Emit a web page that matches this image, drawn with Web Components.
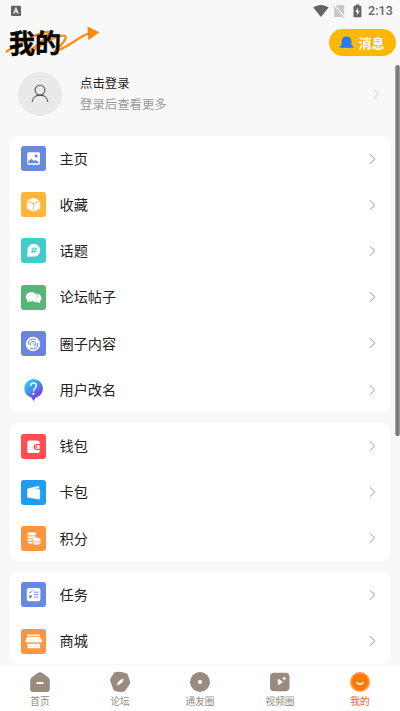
<!DOCTYPE html>
<html lang="zh-CN">
<head>
<meta charset="utf-8">
<title>我的</title>
<style>
html,body{margin:0;height:100%;overflow:hidden}
body{font-family:"Noto Sans CJK SC",sans-serif;background:#f8f8f8;color:#222}
</style>
</head>
<body>
<profile-app></profile-app>
<script>
const ICONS = {
  home: `<rect width="25" height="25" rx="3" fill="#668bdd"/><rect x="6.3" y="6.2" width="12.6" height="12.6" rx="1.2" fill="#fff"/><path d="M7.2 17.3V15.5l3.2-2.8 2.4 2.3 1.7-1 3 1.8v1.5z" fill="#668bdd"/><circle cx="15.1" cy="9.9" r="1.5" fill="#668bdd"/>`,
  box: `<rect width="25" height="25" rx="3" fill="#ffb43c"/><path d="M12.5 5.7 18 8.4 12.5 11.2 7 8.4zM6.2 9.6l5.8 2.9v7.1l-5.8-3zM18.8 9.6 13 12.5v7.1l5.8-3z" fill="#fff" stroke="#fff" stroke-width=".4" stroke-linejoin="round"/>`,
  topic: `<rect width="25" height="25" rx="3" fill="#40ccc8"/><path d="M6.4 18.7V12.2a6.4 6.4 0 1 1 6.4 6.4z" fill="#fff"/><path d="M12.5 9.3l-1.4 5.8M15.1 9.3l-1.4 5.8M10.5 11h5.3M10 13.4h5.3" stroke="#40ccc8" stroke-width="1"/>`,
  forum: `<rect width="25" height="25" rx="3" fill="#55b777"/><path d="M15.8 8.6c2.8.2 4.6 2.1 4.6 4.4 0 1.4-.6 2.5-1.6 3.3l.6 2-2.4-1.1c-1.6.3-3.3 0-4.5-.8 3.3-.9 5.2-4.3 3.3-7.8z" fill="#fff"/><path d="M10.4 7.2c3.4 0 5.8 2 5.8 4.6s-2.4 4.7-5.8 4.7c-.7 0-1.4-.1-2-.3l-2.3 1.3.5-2.3c-1.2-.9-1.8-2-1.8-3.4 0-2.6 2.4-4.6 5.6-4.6z" fill="#fff"/>`,
  circle: `<rect width="25" height="25" rx="3" fill="#6b84e2"/><circle cx="12" cy="13" r="7.2" fill="#fff"/><g fill="none" stroke="#6b84e2" stroke-width="1" stroke-linecap="round"><path d="M7.2 13.4a5 5 0 0 1 7.4-4.9M17 12.4a5 5 0 0 1-7.4 5"/><path d="M9.4 14a2.8 2.8 0 1 1 4.3 1.5"/><path d="M12 12.8l1.2.7"/></g>`,
  rename: `<defs><linearGradient id="g" x1="0" y1="0" x2=".75" y2="1"><stop offset=".1" stop-color="#25d3f5"/><stop offset=".5" stop-color="#478df0"/><stop offset="1" stop-color="#8a1fd2"/></linearGradient></defs><path d="M12.5 2a9.4 9.4 0 0 1 9.4 9.4c0 4.4-3 8-7.1 9.1L12.5 24l-2.2-3.5A9.4 9.4 0 0 1 12.5 2z" fill="url(#g)"/><path d="M9.8 8.6C10 6.8 11.1 6 12.6 6c1.7 0 2.8 1 2.8 2.6 0 2.2-2.6 2.5-2.8 5.2" fill="none" stroke="#e5ffff" stroke-width="1.5" stroke-linecap="round"/><circle cx="12.4" cy="16.8" r="1.1" fill="#e5ffff"/>`,
  wallet: `<rect width="25" height="25" rx="3" fill="#fe4f50"/><path d="M8.5 6.4h8a2.2 2.2 0 0 1 2.2 2.2v1.5h-3.2a2.9 2.9 0 0 0 0 5.8h3.2v1a2.2 2.2 0 0 1-2.2 2.2h-8a2.2 2.2 0 0 1-2.2-2.2V8.6a2.2 2.2 0 0 1 2.2-2.2z" fill="#fff"/><path d="M15.6 11.2h3.1v3.5h-3.1a1.75 1.75 0 0 1 0-3.5z" fill="#fff"/><circle cx="15.3" cy="12.9" r="1" fill="#fe4f50"/>`,
  card: `<rect width="25" height="25" rx="3" fill="#209df0"/><path d="M6.6 8.9 17.6 6.2l.4 2-7.4 1.1 8 .2.1 9.6-12.1-1.8z" fill="#fff" stroke="#fff" stroke-width=".7" stroke-linejoin="round"/><path d="M13 9.1l5.8-.7v.7z" fill="#209df0"/>`,
  coins: `<rect width="25" height="25" rx="3" fill="#ff9541"/><ellipse cx="10.8" cy="7.8" rx="4.2" ry="1.8" fill="#fff"/><path d="M6.6 8.9c1.4 1.8 6.9 1.8 8.4 0v2c-1.4.4-2.8.9-3.7 1.7-2 .2-4.1-.2-4.7-1.1zM6.6 12.2c1.1.8 2.6 1.1 4.2 1v2c-1.6.2-3.7-.2-4.2-1.1zM6.6 15c1.1.8 2.6 1.1 4.2 1v1.7c-2.3.1-4.2-.5-4.2-1.4z" fill="#fff" opacity=".88"/><ellipse cx="15.5" cy="13.4" rx="4" ry="2" fill="#fff"/><path d="M11.5 14.8c1.5 1.7 6.5 1.7 8 0v2.6c-1.2 1.7-6.8 1.7-8 0z" fill="#fff" opacity=".75"/>`,
  task: `<rect width="25" height="25" rx="3" fill="#668bdd"/><rect x="5.8" y="6" width="13.6" height="13.2" rx="2.2" fill="#fff"/><path d="m8 9.7 1.2 1.2 2.3-2.5M13 10.2h4.6M13 12.5h4.6M13 15h4.6" fill="none" stroke="#668bdd" stroke-width=".9"/><circle cx="9.4" cy="14.5" r="1.5" fill="#668bdd"/>`,
  shop: `<rect width="25" height="25" rx="3" fill="#ff9541"/><path d="M6 5.5h13v1.3H6zM6.1 7.8h12.8l2.3 4c0 2.1-2.8 2.5-3.6.8-1 1.7-3.1 1.7-4.2 0-1 1.7-2.6 1.7-3.8 0-1.2 1.7-5.4 1.3-5.2-.8zM6.5 14.9c1.1.2 2.2-.1 3.1-.6 1.1.9 2.6.8 3.7 0 1.2.8 2.7.9 4 0 .6.4 1.1.6 1.6.6v4.3H6.5z" fill="#fff"/>`
};
const chevron = `<svg part="arrow" width="7" height="12" viewBox="0 0 7 12"><path d="M1 1.4 5.7 6 1 10.6" fill="none" stroke="currentColor" stroke-width="1"/></svg>`;
function element(name, render) {
  customElements.define(name, class extends HTMLElement {
    connectedCallback() {
      if (!this.shadowRoot) this.attachShadow({mode:'open'}).innerHTML = render(this);
    }
  });
}
element('status-bar', () => `<style>
:host{display:flex;height:22px;align-items:center;padding:0 7px 0 10px;color:#656565;font:500 12.5px/22px Roboto,sans-serif;letter-spacing:.1px}
svg{display:block}.space{flex:1}.wifi{margin-right:4px}.sim{margin-right:8px}.bat{margin-right:6px}
</style><svg width="12" height="12" viewBox="0 0 12 12"><rect x="1" y=".7" width="10" height="10.3" rx="1" fill="#646464"/><path d="m3.7 8.5 2.2-5.3 2.2 5.3M4.6 6.7h2.7" fill="none" stroke="#fff" stroke-width="1.1"/></svg><span class="space"></span>
<svg class="wifi" width="16" height="14" viewBox="0 0 16 14"><path d="M.2 3.6C4.6.2 11.2.2 15.6 3.6L8 13z" fill="#646464"/></svg>
<svg class="sim" width="12" height="14" viewBox="0 0 12 14"><path d="M4.2 1h7v12h-10V4z" fill="#c8c8c8"/><path d="m.5 1.4 11 12" stroke="#f8f8f8" stroke-width="2.2"/><path d="m.2 2 10.7 11.5" stroke="#b7b7b7"/></svg>
<svg class="bat" width="9" height="14" viewBox="0 0 9 14"><path d="M2.6.6h3.8v1.3h2v11.3H.5V1.9h2.1z" fill="#646464"/><path d="M5.2 3.5 2.3 8h1.9l-.5 3.5L6.8 7H4.9z" fill="#fff"/></svg><span>2:13</span>`);
element('page-heading', () => `<style>
:host{display:flex;height:43px;justify-content:space-between}
.title{position:relative;width:105px}.title svg{position:absolute;left:0;top:0}.title b{position:absolute;left:9px;top:1.5px;font-size:26px;line-height:36px;font-weight:700;color:#000;white-space:nowrap;-webkit-text-stroke:.4px #000}
.message{display:flex;align-items:center;box-sizing:border-box;width:67px;height:27px;border-radius:14px;background:#ffb800;margin:7px 4px 0 0;padding-left:10px;color:#fff;font-size:13px;line-height:27px;font-weight:700;gap:4.5px}.message span{margin-top:-1px}
</style><div class="title"><svg width="105" height="43" viewBox="0 0 105 43" fill="none"><path d="M6 30C17 22 35 12 47 10c6-1-4 9-15 17-4 3-2 3 3 0C46 20 60 12 65 14c3 3-6 11-10 15 9-1 22-13 34-18" stroke="#ff8e0c" stroke-width="2.4"/><path d="m87.5 4.5 11.8 5.8-11 8z" fill="#ff8905"/></svg><b>我的</b></div><div class="message"><svg width="15" height="15" viewBox="0 0 15 15"><path d="M6.4.4h2.2v2H6.4zM5.2 12h4.6L7.5 14.5z" fill="#81dfd4"/><path d="M2.6 10V6.3a4.9 4.9 0 0 1 9.8 0V10l1.8 1.6v1.2H.8v-1.2z" fill="#2879f2"/></svg><span>消息</span></div>`);
element('login-summary', () => `<style>
:host{display:flex;height:70.5px;padding:0 20.5px 0 18px}.avatar{display:flex;width:44px;height:44px;margin-top:7px;border-radius:50%;background:#e9e9e9;align-items:center;justify-content:center}.text{margin:8px 0 0 18px;flex:1;font-size:12.4px;line-height:21px}.text div+div{color:#999}.arrow{color:#ccc;padding-top:23px}.arrow svg{display:block}
</style><div class="avatar"><svg width="18" height="20" viewBox="0 0 18 20" fill="none" stroke="#555" stroke-width="1.1"><circle cx="9" cy="6.2" r="4.9"/><path d="M1.2 18c.2-4 3.2-6.9 7.8-6.9s7.6 2.9 7.8 6.9"/></svg></div><div class="text"><div>点击登录</div><div>登录后查看更多</div></div><div class="arrow">${chevron}</div>`);
element('menu-row', h => `<style>
:host{display:flex;height:46.2px;align-items:center;padding:0 13.5px 0 11px;color:#222;font-size:14.2px;line-height:24px}.icon{display:block;width:25px;height:25px;margin-right:13.3px}.label{flex:1;margin-top:-1.5px}[part=arrow]{color:#999;display:block}
</style><svg class="icon" viewBox="0 0 25 25">${ICONS[h.getAttribute('icon')]}</svg><span class="label"><slot></slot></span>${chevron}`);
element('menu-card', () => `<style>:host{display:block;background:#fff;border-radius:8px;margin:0 10.5px 10.3px 10.2px}</style><slot></slot>`);
const TABS = {
  home:`<path d="M8 .8q2-1.3 4 0l6.4 4.8q1.4 1 1.4 2.8v8.5q0 3-3 3H3.2q-3 0-3-3V8.4q0-1.8 1.4-2.8z" fill="#998c7f"/><rect x="6.5" y="10" width="7" height="2" rx=".5" fill="#fff"/>`,
  forum:`<path d="M5 .5q4-.8 9.8.1 1.5.2 2.2 1.6l3 6.1q.6 1.2 0 2.4l-3.4 7q-.7 1.4-2.2 1.6-4 1-8 .2-1.5-.3-2.2-1.7L.3 10.6q-.7-1.5-.1-3L2.7 2Q3.4.7 5 .5z" fill="#998c7f" transform="rotate(8 10 10)"/><path d="M6.8 13.5q.6-4.8 6.7-6.9.2 5.2-6.7 6.9z" fill="#fff"/>`,
  friends:`<circle cx="10" cy="10" r="10" fill="#998c7f"/><circle cx="10" cy="10" r="2.1" fill="#fff"/>`,
  video:`<rect y=".8" width="19.5" height="18.5" rx="4" fill="#998c7f"/><path d="m8.3 7.3 4 2.6-4 2.7z" fill="#fff" stroke="#fff" stroke-linejoin="round"/><path d="m14.2 4.3.7 1.5 1.5.7-1.5.7-.7 1.5-.7-1.5-1.5-.7 1.5-.7z" fill="#fff"/>`,
  mine:`<circle cx="10" cy="10" r="10" fill="#ff9638"/><circle cx="10" cy="10" r="8.2" fill="#ff7900"/><path d="M7.1 10.6q2.9 3.6 5.8 0" stroke="#fff" stroke-width="1.6" stroke-linecap="round" fill="none"/>`
};
element('tab-item', h => `<style>:host{display:flex;flex:1;flex-direction:column;align-items:center;padding-top:7.5px;color:#998c7f;font-size:9.7px;line-height:17px}:host([active]){color:#ff5b22}svg{display:block;width:20px;height:20px;margin-bottom:1px}</style><svg viewBox="0 0 20 20" overflow="visible">${TABS[h.getAttribute('icon')]}</svg><slot></slot>`);
element('tab-bar', () => `<style>:host{display:flex;height:46.5px;flex:none;background:#fff}</style><slot></slot>`);
element('profile-app', () => `<style>
:host{display:flex;flex-direction:column;position:relative;height:100vh;overflow:hidden;background:#f8f8f8}.content{flex:1;min-height:0;overflow:hidden}.scroll{position:absolute;right:0;top:65px;width:5px;height:371px;border-radius:3px;background:linear-gradient(90deg,#aaa,#777 40%,#777 65%,#aaa)}
</style><status-bar></status-bar><page-heading></page-heading><div class="content"><login-summary></login-summary>
<menu-card><menu-row icon="home">主页</menu-row><menu-row icon="box">收藏</menu-row><menu-row icon="topic">话题</menu-row><menu-row icon="forum">论坛帖子</menu-row><menu-row icon="circle">圈子内容</menu-row><menu-row icon="rename">用户改名</menu-row></menu-card>
<menu-card><menu-row icon="wallet">钱包</menu-row><menu-row icon="card">卡包</menu-row><menu-row icon="coins">积分</menu-row></menu-card>
<menu-card><menu-row icon="task">任务</menu-row><menu-row icon="shop">商城</menu-row></menu-card></div>
<tab-bar><tab-item icon="home">首页</tab-item><tab-item icon="forum">论坛</tab-item><tab-item icon="friends">通友圈</tab-item><tab-item icon="video">视频圈</tab-item><tab-item icon="mine" active>我的</tab-item></tab-bar><div class="scroll"></div>`);
</script>
</body>
</html>
